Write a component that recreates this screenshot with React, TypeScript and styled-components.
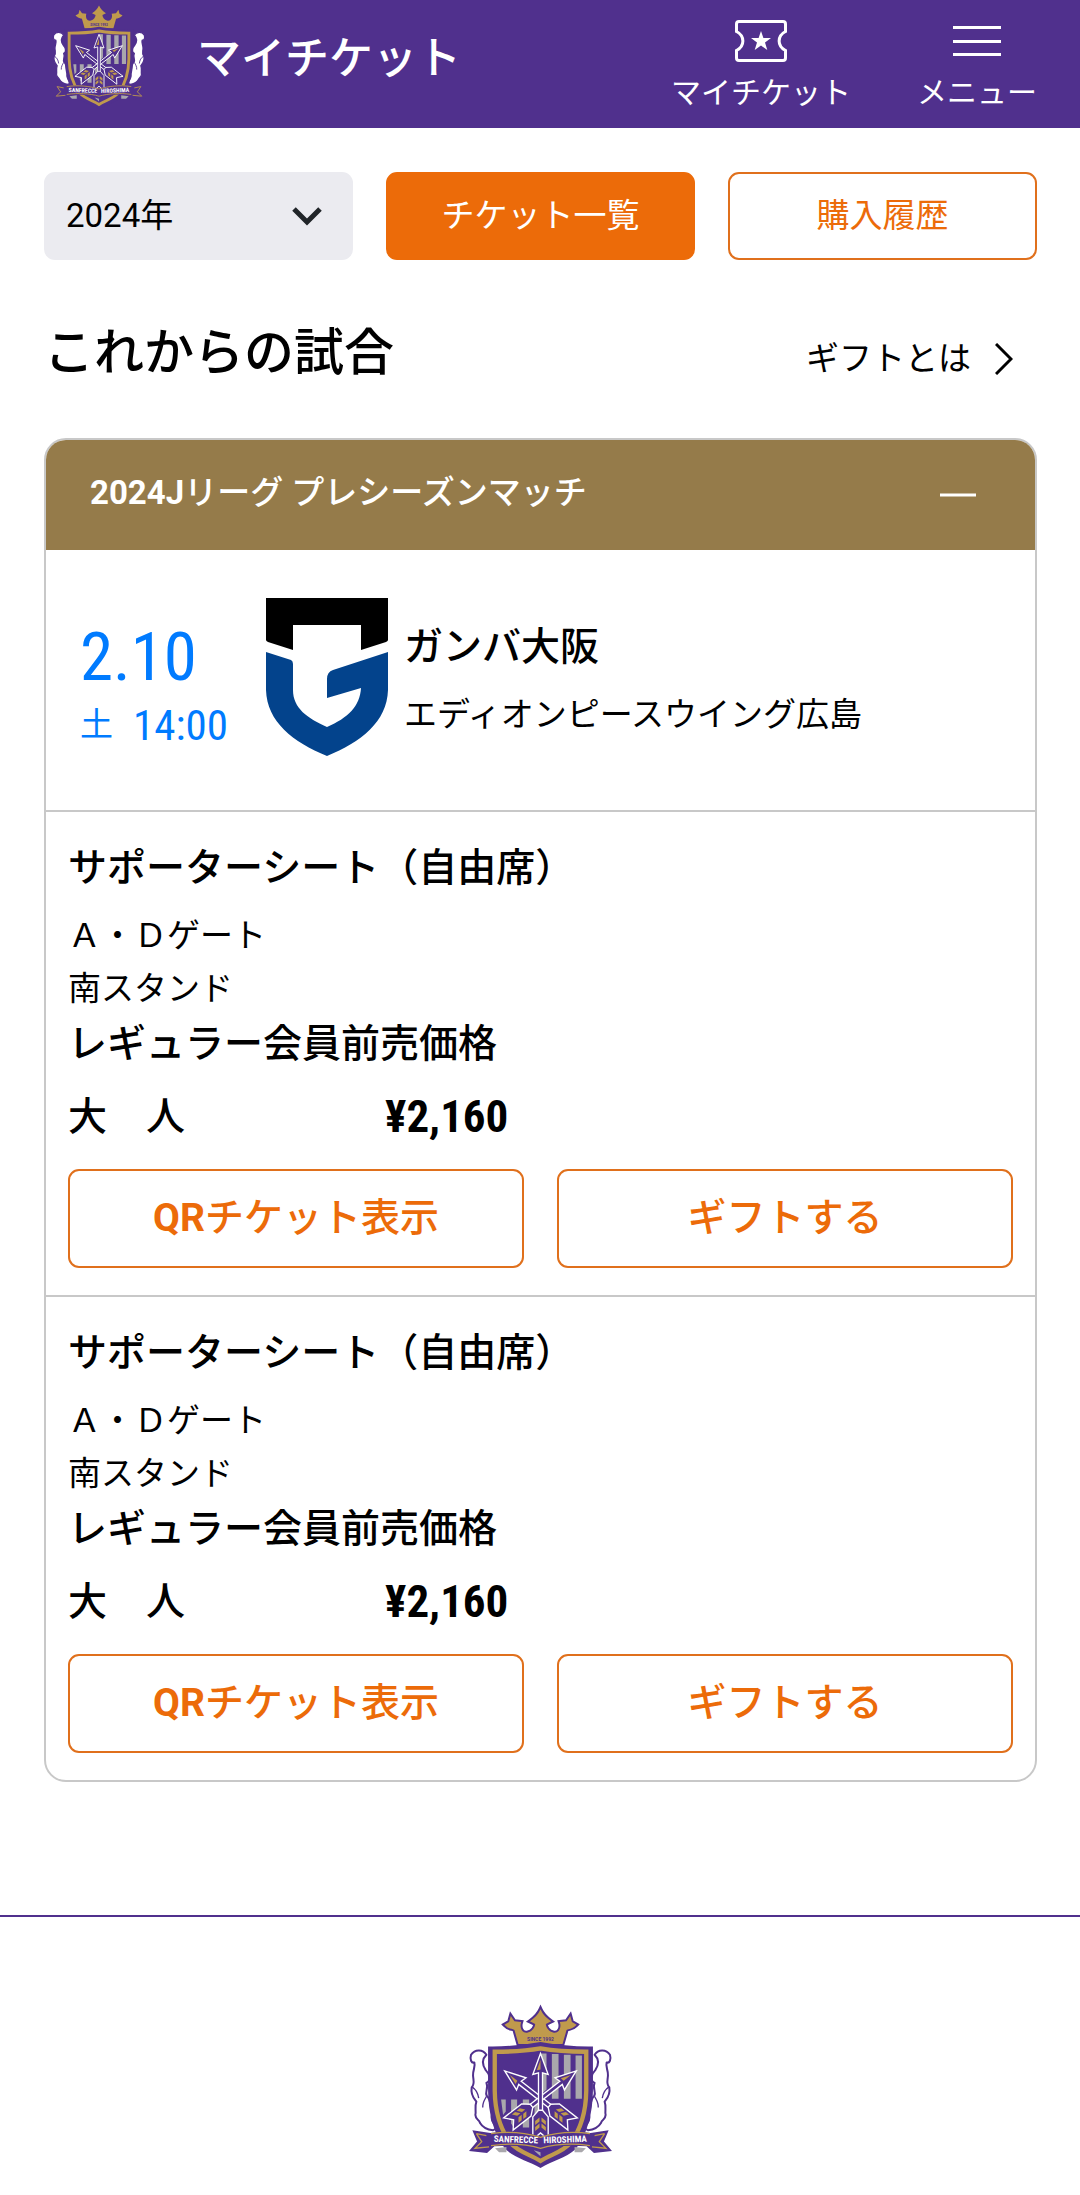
import React from 'react';
import styled, { createGlobalStyle } from 'styled-components';

const color = {
  purple: '#50308d',
  orange: '#ec6b09',
  outline: '#e0701c',
  gold: '#957b4a',
  line: '#c8c8c8',
  blue: '#007bff',
  field: '#ebebf0',
};

const GlobalStyle = createGlobalStyle`
  *, *::before, *::after { box-sizing: border-box; }
  body {
    margin: 0;
    background: #fff;
    color: #000;
    font-family: Roboto, "Noto Sans CJK JP", sans-serif;
    font-size: 33px;
    line-height: 53px;
  }
  h1, h2, h3, p { margin: 0; }
  button, select { font: inherit; margin: 0; }
  a { color: inherit; text-decoration: none; }
  svg { display: block; flex: none; }
`;

const Header = styled.header`
  display: flex;
  align-items: flex-start;
  min-height: 128px;
  padding: 2px 43px 0 51px;
  background: ${color.purple};
  color: #fff;
`;

const PageTitle = styled.h1`
  margin: 25px auto 0 50px;
  font-size: 44px;
  font-weight: 500;
  line-height: 64px;
`;

const Nav = styled.nav`
  display: flex;
  gap: 66px;
`;

const NavLink = styled.a`
  display: flex;
  flex-direction: column;
  align-items: center;
  gap: 8px;
  padding-top: 17px;
  font-size: 30px;
  line-height: 44px;
`;

const NavButton = styled(NavLink).attrs({ as: 'button', type: 'button' })`
  padding: 17px 0 0;
  border: 0;
  background: none;
  color: inherit;
  font-size: 30px;
  line-height: 44px;
`;

const Main = styled.main`
  padding: 44px 43px 133px 44px;
`;

const Filters = styled.div`
  display: grid;
  grid-template-columns: repeat(3, 1fr);
  gap: 33px;
`;

const YearField = styled.label`
  display: grid;
  align-items: center;
  height: 88px;
  border-radius: 11px;
  background: ${color.field};

  > * { grid-area: 1 / 1; }
  > svg { justify-self: end; margin-right: 30px; pointer-events: none; }
`;

const YearSelect = styled.select`
  width: 100%;
  height: 100%;
  padding: 0 22px 2px;
  border: 0;
  border-radius: 11px;
  background: transparent;
  color: #000;
  appearance: none;
`;

const Button = styled.button<{ $filled?: boolean; $large?: boolean }>`
  height: ${p => (p.$large ? 99 : 88)}px;
  padding: 0 0 2px;
  border: 2px solid ${p => (p.$filled ? color.orange : color.outline)};
  border-radius: 11px;
  background: ${p => (p.$filled ? color.orange : '#fff')};
  color: ${p => (p.$filled ? '#fff' : color.orange)};
  font-size: ${p => (p.$large ? 39 : 33)}px;
  font-weight: ${p => (p.$large ? 500 : 400)};
`;

const SectionHead = styled.div`
  display: flex;
  justify-content: space-between;
  align-items: baseline;
  margin: 58px 0 50px;
`;

const SectionTitle = styled.h2`
  font-size: 50px;
  font-weight: 500;
  line-height: 70px;
`;

const GiftLink = styled.a`
  display: flex;
  align-items: center;
  gap: 24px;
  padding-right: 24px;
`;

const Card = styled.section`
  overflow: hidden;
  border: 2px solid ${color.line};
  border-radius: 22px;
`;

const CardHead = styled.button`
  display: flex;
  justify-content: space-between;
  align-items: center;
  width: 100%;
  height: 110px;
  padding: 0 59px 0 44px;
  border: 0;
  background: ${color.gold};
  color: #fff;
  font-weight: 500;
`;

const CardTitle = styled.span`
  padding-bottom: 5px;
`;

const Latin = styled.span`
  font-weight: 700;
`;

const Match = styled.div`
  display: flex;
  align-items: flex-start;
  padding: 48px 34px 51px;
`;

const When = styled.div`
  width: 186px;
  margin-top: 25px;
  color: ${color.blue};
  font-family: "Roboto Condensed", "Liberation Sans Narrow", Roboto, "Noto Sans CJK JP", sans-serif;
  line-height: 68px;
`;

const Day = styled.p`
  font-size: 67px;
`;

const Kickoff = styled.p`
  display: flex;
  gap: 20px;
`;

const Time = styled.time`
  font-size: 43px;
`;

const Place = styled.div`
  margin: 15px 0 0 16px;
  line-height: 68px;
`;

const Strong = styled.h3`
  font-size: 39px;
  font-weight: 500;
  line-height: inherit;
`;

const Ticket = styled.article`
  padding: 29px 22px 27px;
  border-top: 2px solid ${color.line};
  font-size: 39px;
  font-weight: 500;
  line-height: 58px;
`;

const Seat = styled.h3`
  margin-bottom: 14px;
  font-size: 39px;
  font-weight: 500;
  line-height: 54px;
`;

const Detail = styled.p`
  font-size: 33px;
  font-weight: 400;
  line-height: 53px;
`;

const PriceRow = styled.div`
  display: grid;
  grid-template-columns: 317px 1fr;
  margin: 15px 0 23px;
`;

const Price = styled.span`
  font-family: "Roboto Condensed", "Liberation Sans Narrow", Roboto, sans-serif;
  font-size: 45px;
  font-weight: 700;
`;

const Actions = styled.div`
  display: grid;
  grid-template-columns: 1fr 1fr;
  gap: 33px;
`;

const Footer = styled.footer`
  display: flex;
  justify-content: center;
  padding: 87px 44px 25px;
  border-top: 2px solid ${color.purple};
`;

const P = color.purple;
const G = '#c09a4c';

const Arrow = ({ angle }: { angle: number }) => (
  <g transform={`rotate(${angle} 300 354)`} stroke="#fff" strokeWidth="4" fill={P}>
    <path d="M294 410V276L277 281L300 218L323 281L306 276V410" />
    <path d="M300 238V266L289 268Z" fill={G} stroke="none" />
    <path d="M294 388L277 408V476L300 456L323 476V408L306 388Z" />
    <path
      d="M297 410L284 420V432L297 422ZM303 410L316 420V432L303 422ZM297 428L284 438V450L297 440ZM303 428L316 438V450L303 440Z"
      fill={G}
      stroke="none"
    />
  </g>
);

const Leaf = () => (
  <g stroke={P} strokeWidth="6" strokeLinejoin="round">
    <path
      d="M138 222C128 206 104 204 92 222C88 236 93 248 102 245C106 258 97 268 98 284C99 300 104 308 94 320C90 344 102 354 108 362C102 378 108 388 105 402C106 418 116 414 119 426C126 438 142 446 158 448L172 440C156 428 150 412 156 396C148 382 154 358 139 345C132 334 146 322 138 306C152 300 150 282 136 268C124 250 126 234 138 222Z"
      fill="#fff"
    />
    <path d="M95 318C107 326 113 336 115 352M138 347C132 358 126 366 127 380" fill="none" strokeWidth="4" />
  </g>
);

const ClubCrest = ({ width, height }: { width: number; height: number }) => (
  <svg width={width} height={height} viewBox="80 70 440 500" role="img" aria-label="サンフレッチェ広島">
    <Leaf />
    <g transform="translate(600 0) scale(-1 1)"><Leaf /></g>
    <path
      d="M234 190L222 148C214 142 208 148 192 132L206 124L211 106L222 122L242 124C236 142 246 158 260 156C278 152 284 138 284 130L268 122C282 112 292 104 300 86C308 104 318 112 332 122L316 130C316 138 322 152 340 156C354 158 364 142 358 124L378 122L389 106L394 124L408 132C392 148 386 142 378 148L366 190Z"
      fill={G}
      stroke={P}
      strokeWidth="12"
      strokeLinejoin="miter"
      paintOrder="stroke"
    />
    <path d="M143 197C190 198 245 194 300 184C355 194 410 198 457 197V330C456 400 440 460 405 505C375 532 335 540 300 561C265 540 225 532 195 505C160 460 144 400 143 330Z" fill={P} />
    <path d="M163 213C210 213 255 211 300 203C345 211 390 213 437 213V330C436 400 420 446 390 486C365 515 330 520 300 540C270 520 235 515 210 486C180 446 164 400 163 330Z" fill="none" stroke={G} strokeWidth="13" />
    <path d="M302 218H318V326L302 340ZM334 220H354V354H334ZM370 222H390V354H370ZM405 224H424V354H405ZM182 356H196V392L188 402ZM212 356H230V440H220L212 428ZM247 356H266V440H247ZM282 356H296V440H282Z" fill="#a9a7ac" />
    <Arrow angle={-52} />
    <Arrow angle={52} />
    <Arrow angle={0} />
    <path d="M150 456C200 448 255 454 300 466C345 454 400 448 450 456L504 448L490 482L514 510L460 516L438 496C390 492 340 494 300 506C260 494 210 492 162 496L140 516L86 510L110 482L96 448Z" fill={P} />
    <path d="M280 508L300 514V526Z" fill="#a9a7ac" />
    <path d="M108 458L138 464M108 458L124 482L104 502L146 498M492 458L462 464M492 458L476 482L496 502L454 498" fill="none" stroke={G} strokeWidth="4" />
    <path d="M152 458C205 450 258 456 300 469C342 456 395 450 448 458M152 494C205 486 258 490 300 502C342 490 395 486 448 494" fill="none" stroke={G} strokeWidth="4" />
    <path d="M164 502L198 498V514H176ZM436 502L402 498V514H424Z" fill="#a9a7ac" />
    <g fill="#fff" fontFamily="Liberation Sans Narrow, Roboto Condensed, Roboto, sans-serif" fontWeight="700" fontSize="27">
      <text x="226" y="485" textAnchor="middle" transform="rotate(2 226 485)">SANFRECCE</text>
      <text x="374" y="485" textAnchor="middle" transform="rotate(-2 374 485)">HIROSHIMA</text>
    </g>
    <text x="300" y="181" textAnchor="middle" fill={P} fontFamily="Roboto, sans-serif" fontWeight="700" fontSize="15">SINCE 1992</text>
  </svg>
);

const TicketIcon = () => (
  <svg width="54" height="44" viewBox="0 0 54 44" aria-hidden="true">
    <path
      d="M5 2.500H49Q51.500 2.500 51.500 5V12.500C43 17 43 27 51.500 31.500V39Q51.500 41.500 49 41.500H5Q2.500 41.500 2.500 39V31.500C11 27 11 17 2.500 12.500V5Q2.500 2.500 5 2.500Z"
      fill="none"
      stroke="#fff"
      strokeWidth="3"
    />
    <path d="M27 12L29.400 19H37L31 23.500L33.300 31L27 26.500L20.700 31L23 23.500L17 19H24.600Z" fill="#fff" />
  </svg>
);

const MenuIcon = () => (
  <svg width="48" height="44" viewBox="0 0 48 44" aria-hidden="true">
    <path d="M0 8.500H48M0 22.500H48M0 35.500H48" stroke="#fff" strokeWidth="3" />
  </svg>
);

const OpponentCrest = () => (
  <svg width="122" height="158" viewBox="0 0 122 158" role="img" aria-label="ガンバ大阪">
    <path d="M0 0H122V42Q122 43 120 44L95 52V27H27V52L2 44Q0 43 0 42Z" fill="#000" />
    <path d="M0 54L25 62Q27 63 27 66V92C27 110 41 120 61 129C82 120 94 108 95 90L61 100V81Q61 74 67 72L122 54V92C121 124 95 144 61 158C27 144 1 124 0 92Z" fill="#03438c" />
  </svg>
);

const tickets = [
  { id: 1, seat: 'サポーターシート（自由席）', gate: 'Ａ・Ｄゲート', stand: '南スタンド', plan: 'レギュラー会員前売価格', who: '大　人', price: '¥2,160' },
  { id: 2, seat: 'サポーターシート（自由席）', gate: 'Ａ・Ｄゲート', stand: '南スタンド', plan: 'レギュラー会員前売価格', who: '大　人', price: '¥2,160' },
];

export default function App() {
  return (
    <>
      <GlobalStyle />
      <Header>
        <ClubCrest width={96} height={109} />
        <PageTitle>マイチケット</PageTitle>
        <Nav>
          <NavLink href="#tickets">
            <TicketIcon />
            マイチケット
          </NavLink>
          <NavButton>
            <MenuIcon />
            メニュー
          </NavButton>
        </Nav>
      </Header>
      <Main>
        <Filters>
          <YearField>
            <YearSelect aria-label="年" defaultValue="2024">
              <option value="2024">2024年</option>
            </YearSelect>
            <svg width="32" height="20" viewBox="0 0 32 20" aria-hidden="true">
              <path d="M3 3L16 16L29 3" fill="none" stroke="#212529" strokeWidth="5" />
            </svg>
          </YearField>
          <Button type="button" $filled>チケット一覧</Button>
          <Button type="button">購入履歴</Button>
        </Filters>
        <SectionHead>
          <SectionTitle>これからの試合</SectionTitle>
          <GiftLink href="#gift">
            ギフトとは
            <svg width="18" height="32" viewBox="0 0 18 32" aria-hidden="true">
              <path d="M1 1L16 16L1 31" fill="none" stroke="#000" strokeWidth="3" />
            </svg>
          </GiftLink>
        </SectionHead>
        <Card id="tickets">
          <CardHead type="button" aria-expanded="true">
            <CardTitle><Latin>2024J</Latin>リーグ プレシーズンマッチ</CardTitle>
            <svg width="36" height="4" viewBox="0 0 36 4" aria-hidden="true">
              <path d="M0 2H36" stroke="#fff" strokeWidth="3" />
            </svg>
          </CardHead>
          <Match>
            <When>
              <Day>2.10</Day>
              <Kickoff>土<Time>14:00</Time></Kickoff>
            </When>
            <OpponentCrest />
            <Place>
              <Strong>ガンバ大阪</Strong>
              <p>エディオンピースウイング広島</p>
            </Place>
          </Match>
          {tickets.map(t => (
            <Ticket key={t.id}>
              <Seat>{t.seat}</Seat>
              <Detail>{t.gate}</Detail>
              <Detail>{t.stand}</Detail>
              <p>{t.plan}</p>
              <PriceRow>
                <span>{t.who}</span>
                <Price>{t.price}</Price>
              </PriceRow>
              <Actions>
                <Button type="button" $large><Latin>QR</Latin>チケット表示</Button>
                <Button type="button" $large>ギフトする</Button>
              </Actions>
            </Ticket>
          ))}
        </Card>
      </Main>
      <Footer>
        <ClubCrest width={147} height={167} />
      </Footer>
    </>
  );
}
